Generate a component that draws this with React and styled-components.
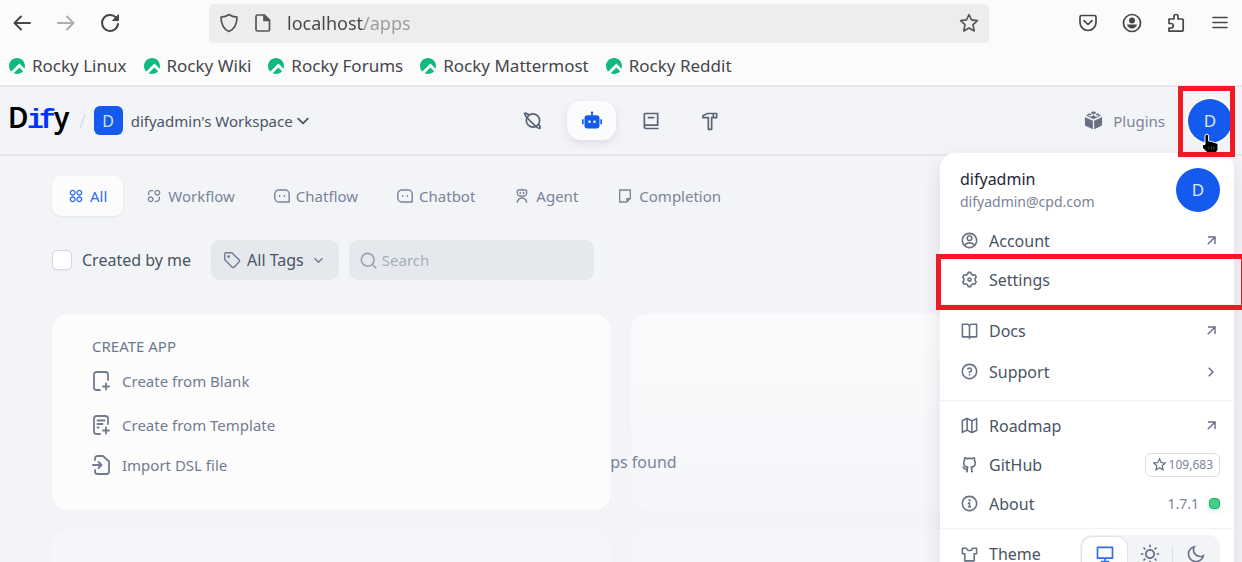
import React, { useState } from "react";
import styled, { createGlobalStyle } from "styled-components";
import {
  RiAccountCircleLine,
  RiApps2Line,
  RiArrowDownSLine,
  RiArrowRightSLine,
  RiArrowRightUpLine,
  RiBook2Line,
  RiBookOpenLine,
  RiComputerLine,
  RiExchange2Line,
  RiFile4Line,
  RiGithubLine,
  RiHammerLine,
  RiInformation2Line,
  RiMap2Line,
  RiMoonLine,
  RiQuestionLine,
  RiRobot2Fill,
  RiRobot3Line,
  RiSearchLine,
  RiSettings3Line,
  RiStarLine,
  RiSunLine,
  RiTShirt2Line,
} from "react-icons/ri";
import { SiRockylinux } from "react-icons/si";

const GlobalStyle = createGlobalStyle`
  * {
    box-sizing: border-box;
  }
  body {
    margin: 0;
    overflow: hidden;
    font-family: "Noto Sans", "Open Sans", sans-serif;
    background: #f2f4f8;
  }
  button, input {
    font-family: inherit;
  }
  button {
    padding: 0;
    border: 0;
    background: none;
    cursor: pointer;
  }
  a {
    color: inherit;
    text-decoration: none;
  }
  svg {
    display: block;
    flex-shrink: 0;
  }
`;

const Page = styled.div`
  display: flex;
  flex-direction: column;
  height: 100vh;
  overflow: hidden;
`;

/* browser chrome */
const Browser = styled.div`
  flex-shrink: 0;
  background: #fbfbfb;
  border-bottom: 2px solid #e6e8ea;
  color: #46464b;
`;
const Toolbar = styled.div`
  display: flex;
  align-items: center;
  height: 46px;
`;
const ToolGroup = styled.div`
  display: flex;
`;
const ToolButton = styled.button`
  display: flex;
  align-items: center;
  justify-content: center;
  width: 44px;
  height: 40px;
  color: ${(props) => (props.$dim ? "#adadaf" : "#46464b")};
`;
const UrlBar = styled.div`
  display: flex;
  align-items: center;
  flex: 1;
  height: 39px;
  margin: 0 77px;
  padding: 0 10px;
  gap: 14px;
  background: #ededed;
  border-radius: 5px;
  color: #55555a;
`;
const UrlInput = styled.input`
  flex: 1;
  min-width: 0;
  padding: 0;
  border: 0;
  outline: 0;
  font-size: 18px;
  line-height: 24px;
  color: transparent;
  background: linear-gradient(to right, #444449 77px, #9b9b9e 77px);
  background-clip: text;
  -webkit-background-clip: text;
`;
const Bookmarks = styled.nav`
  display: flex;
  align-items: center;
  height: 39px;
  padding: 0 9px;
  gap: 17px;
`;
const Bookmark = styled.a`
  display: flex;
  align-items: center;
  gap: 7px;
  font-size: 17px;
  line-height: 24px;
  svg {
    color: #10b981;
  }
`;

/* app header */
const Header = styled.header`
  position: relative;
  z-index: 2;
  display: grid;
  grid-template-columns: 1fr auto 1fr;
  align-items: center;
  flex-shrink: 0;
  height: 69px;
  padding: 0 10px;
  border-bottom: 2px solid #e6e8ec;
`;
const Brand = styled.div`
  display: flex;
  align-items: center;
  gap: 8px;
`;
const Slash = styled.span`
  font-size: 18px;
  line-height: 24px;
  color: #d9dce3;
`;
const Workspace = styled.button`
  display: flex;
  align-items: center;
  gap: 8px;
  font-size: 15px;
  line-height: 24px;
  color: #495464;
`;
const WorkspaceBadge = styled.span`
  width: 29px;
  height: 29px;
  border-radius: 6px;
  background: #155aef;
  color: #d5e2fd;
  font-size: 16px;
  line-height: 30px;
  text-align: center;
`;
const WorkspaceName = styled.span`
  display: flex;
  align-items: center;
  gap: 4px;
`;
const MainNav = styled.nav`
  display: flex;
  gap: 10px;
`;
const NavButton = styled.button`
  display: flex;
  align-items: center;
  justify-content: center;
  width: 49px;
  height: 39px;
  border-radius: 14px;
  color: ${(props) => (props.$active ? "#155aef" : "#596376")};
  background: ${(props) => (props.$active ? "#fcfcfd" : "transparent")};
  box-shadow: ${(props) =>
    props.$active ? "0 3px 8px rgba(16, 24, 40, 0.1)" : "none"};
`;
const HeaderRight = styled.div`
  display: flex;
  align-items: center;
  justify-content: flex-end;
  gap: 23px;
`;
const PluginsLink = styled.a`
  display: flex;
  align-items: center;
  gap: 10px;
  font-size: 15px;
  line-height: 24px;
  color: #7b8498;
`;
const AvatarSlot = styled.div`
  position: relative;
`;
const Avatar = styled.button`
  display: block;
  width: 44px;
  height: 44px;
  border-radius: 50%;
  background: #155aef;
  color: #dce7fd;
  font-size: 17px;
  line-height: 44px;
  text-align: center;
  box-shadow: ${(props) => (props.$ring ? "0 0 0 2px #fff" : "none")};
`;
const AvatarMark = styled.div`
  position: absolute;
  inset: -13px -3px -14px -10px;
  border: 5px solid #ee1b24;
  pointer-events: none;
`;
const Pointer = styled.svg`
  position: absolute;
  left: 12px;
  top: 34px;
`;

/* filters */
const Main = styled.main`
  flex: 1;
  padding: 20px 52px;
`;
const Tabs = styled.div`
  display: flex;
  gap: 7px;
`;
const Tab = styled.button`
  display: flex;
  align-items: center;
  height: 40px;
  padding: 0 16px;
  gap: 6px;
  border-radius: 9px;
  font-size: 15px;
  line-height: 24px;
  color: ${(props) => (props.$active ? "#2f6bf2" : "#7b8498")};
  background: ${(props) => (props.$active ? "#fcfcfd" : "transparent")};
  box-shadow: ${(props) =>
    props.$active ? "0 1px 2px rgba(16, 24, 40, 0.08)" : "none"};
`;
const Filters = styled.div`
  display: flex;
  align-items: center;
  margin-top: 24px;
  margin-bottom: 34px;
  gap: 10px;
`;
const CheckLabel = styled.label`
  display: flex;
  align-items: center;
  gap: 10px;
  margin-right: 10px;
  font-size: 16px;
  line-height: 24px;
  color: #495464;
`;
const Checkbox = styled.input`
  appearance: none;
  width: 20px;
  height: 20px;
  margin: 0;
  border: 1px solid #d3d7df;
  border-radius: 5px;
  background: #fff;
  box-shadow: 0 1px 2px rgba(16, 24, 40, 0.06);
  &:checked {
    background: #155aef;
  }
`;
const TagFilter = styled.button`
  display: flex;
  align-items: center;
  height: 40px;
  padding: 0 12px;
  gap: 6px;
  border-radius: 9px;
  background: #e5e9ee;
  font-size: 16px;
  line-height: 24px;
  color: #495464;
  svg {
    color: #717b8f;
  }
`;
const SearchBox = styled.label`
  display: flex;
  align-items: center;
  width: 245px;
  height: 40px;
  padding: 0 10px;
  gap: 4px;
  border-radius: 9px;
  background: #e5e9ee;
  color: #98a2b3;
`;
const SearchInput = styled.input`
  flex: 1;
  min-width: 0;
  padding: 0;
  border: 0;
  outline: 0;
  background: none;
  font-size: 15px;
  line-height: 24px;
  color: #495464;
  &::placeholder {
    color: #a4adbd;
  }
`;

/* app cards */
const Cards = styled.section`
  position: relative;
  display: grid;
  grid-template-columns: 1fr 1fr;
  grid-auto-rows: 196px;
  gap: 20px;
`;
const CreateCard = styled.div`
  position: relative;
  z-index: 1;
  padding: 20px 40px;
  border-radius: 15px;
  background: #fcfcfd;
  box-shadow: 0 0 1px rgba(16, 24, 40, 0.12);
`;
const CardTitle = styled.h2`
  margin: 0 0 3px;
  font-size: 15px;
  font-weight: 400;
  line-height: 24px;
  color: #6f798d;
`;
const CreateItem = styled.button`
  display: flex;
  align-items: center;
  height: 40px;
  gap: 10px;
  font-size: 15px;
  line-height: 24px;
  color: #717b8f;
  &:first-of-type {
    margin-bottom: 4px;
  }
`;
const GhostCard = styled.div`
  border-radius: 15px;
  background: ${(props) =>
    props.$faint
      ? "#f4f6f9"
      : "linear-gradient(to bottom, #fafbfc, #f7f8fa 50%, #f4f6f9)"};
`;
const EmptyText = styled.p`
  position: absolute;
  top: 136px;
  left: 0;
  right: 0;
  margin: 0;
  font-size: 16px;
  line-height: 24px;
  text-align: center;
  color: #7b8498;
`;

/* account menu */
const Menu = styled.div`
  position: absolute;
  z-index: -1;
  top: 66px;
  right: 8px;
  width: 294px;
  background: #fff;
  border-radius: 15px;
  box-shadow: 0 8px 20px rgba(16, 24, 40, 0.1);
`;
const Profile = styled.div`
  display: flex;
  align-items: center;
  justify-content: space-between;
  height: 68px;
  padding: 6px 14px 0 20px;
`;
const ProfileName = styled.div`
  font-size: 16px;
  line-height: 24px;
  color: #1d2739;
`;
const ProfileMail = styled.div`
  font-size: 14px;
  line-height: 22px;
  color: #7b8498;
`;
const MenuGroup = styled.div`
  display: flex;
  flex-direction: column;
  gap: ${(props) => (props.$roomy ? "2px" : "0")};
  padding: ${(props) => (props.$roomy ? "6px 0 9px" : "5px 0")};
  border-top: 1px solid #f1f2f5;
`;
const AccountGroup = styled(MenuGroup)`
  padding-top: 0;
  border-top: 0;
`;
const MenuItem = styled.button`
  position: relative;
  display: flex;
  align-items: center;
  width: 100%;
  height: 39px;
  padding: 0 14px 0 20px;
  gap: 10px;
  font-size: 16px;
  line-height: 24px;
  text-align: left;
  color: #495464;
  svg {
    color: #677084;
  }
`;
const ItemLabel = styled.span`
  flex: 1;
`;
const ArrowBox = styled.span`
  display: flex;
  justify-content: center;
  width: 18px;
`;
const SettingsMark = styled.span`
  position: absolute;
  inset: -6px -12px -11px -4px;
  border: 5px solid #ee1b24;
  pointer-events: none;
`;
const StarCount = styled.span`
  display: flex;
  align-items: center;
  height: 24px;
  padding: 0 6px;
  gap: 2px;
  border: 1px solid #dcdfe5;
  border-radius: 6px;
  font-size: 12px;
  line-height: 22px;
  color: #7b8498;
`;
const Version = styled.span`
  font-size: 14px;
  line-height: 24px;
  color: #7b8498;
`;
const StatusDot = styled.span`
  width: 11px;
  height: 11px;
  border: 1px solid #17b26a;
  border-radius: 4px;
  background: #47cd89;
  box-shadow: 0 2px 4px rgba(23, 178, 106, 0.25);
`;
const ThemeRow = styled.div`
  display: flex;
  align-items: center;
  height: 40px;
  padding: 0 14px 0 20px;
  gap: 10px;
  font-size: 16px;
  line-height: 24px;
  color: #495464;
  svg {
    color: #677084;
  }
`;
const ThemeSwitch = styled.div`
  display: flex;
  align-items: center;
  padding: 2px;
  border-radius: 12px;
  background: #f2f4f7;
`;
const ThemeButton = styled.button`
  display: flex;
  align-items: center;
  justify-content: center;
  width: 45px;
  height: 35px;
  border-radius: 10px;
  background: ${(props) => (props.$active ? "#fff" : "transparent")};
  box-shadow: ${(props) =>
    props.$active ? "0 0 2px rgba(16, 24, 40, 0.25)" : "none"};
  svg {
    color: ${(props) => (props.$active ? "#2f6bf2" : "#677084")};
  }
`;
const ThemeDivider = styled.span`
  width: 1px;
  height: 17px;
  background: #dcdfe5;
`;

const Stroke = ({ size = 20, width = 2, children }) => (
  <svg
    width={size}
    height={size}
    viewBox="0 0 20 20"
    fill="none"
    stroke="currentColor"
    strokeWidth={width}
    strokeLinecap="round"
    strokeLinejoin="round"
  >
    {children}
  </svg>
);

const BackIcon = () => (
  <Stroke>
    <path d="M18 10H3M9 3.5L2.5 10l6.5 6.5" />
  </Stroke>
);
const ForwardIcon = () => (
  <Stroke>
    <path d="M2 10h15M11 3.5l6.5 6.5-6.5 6.5" />
  </Stroke>
);
const ReloadIcon = () => (
  <Stroke>
    <path d="M18 11a8 8 0 1 1-2-6.5" />
    <path d="M18.5 2v5.5H13z" fill="currentColor" strokeWidth="1" />
  </Stroke>
);
const ShieldIcon = () => (
  <Stroke width={1.7}>
    <path d="M10 1.5c2.5 1.9 5 2.5 8 2.7 0 6.3-2.2 11.500-8 14.300C4.200 15.700 2 10.500 2 4.200c3-.2 5.500-.8 8-2.700z" />
  </Stroke>
);
const PageIcon = () => (
  <Stroke width={1.7}>
    <path d="M4.500 2h7l5 5v9.500a1.500 1.500 0 0 1-1.500 1.500H4.500A1.500 1.500 0 0 1 3 16.500v-13A1.500 1.500 0 0 1 4.500 2z" />
    <path d="M11 2.500V7.500h5z" fill="currentColor" />
  </Stroke>
);
const StarIcon = () => (
  <Stroke width={1.6}>
    <path d="M10 1.500l2.500 5.400 5.900.7-4.400 4 1.200 6.400L10 15l-5.200 3 1.200-6.400-4.400-4 5.900-.7z" />
  </Stroke>
);
const PocketIcon = () => (
  <Stroke width={1.7}>
    <path d="M3.500 2.500h13A1.500 1.500 0 0 1 18 4v5.500a8 8 0 0 1-16 0V4a1.500 1.500 0 0 1 1.500-1.500z" />
    <path d="M6 7.700l4 3.800 4-3.800" />
  </Stroke>
);
const ProfileIcon = () => (
  <Stroke width={1.7}>
    <circle cx="10" cy="10" r="8.5" />
    <circle cx="10" cy="7.5" r="3" fill="currentColor" stroke="none" />
    <path
      d="M5 11.500h10c-.3 2.300-2.500 4-5 4s-4.700-1.700-5-4z"
      fill="currentColor"
      stroke="none"
    />
  </Stroke>
);
const ExtensionIcon = () => (
  <Stroke width={1.7}>
    <path d="M3 6h5V3.500a2 2 0 0 1 4 0V6h4a1.200 1.200 0 0 1 1.200 1.200V17a1.200 1.200 0 0 1-1.200 1.200H3V15h2a2 2 0 0 0 0-4.500H3z" />
  </Stroke>
);
const MenuIcon = () => (
  <Stroke width={1.6}>
    <path d="M3 4.500h14M3 9.500h14M3 14.500h14" />
  </Stroke>
);
const PlanetIcon = () => (
  <Stroke size={19} width={1.8}>
    <circle cx="10.500" cy="10" r="7" />
    <path d="M6 4C3.500 2.300 2 2 1.700 2.600c-1 1.800 13.800 16.800 16 15.700.8-.4.300-2-1.200-4.300" />
  </Stroke>
);
const ChatIcon = () => (
  <Stroke size={16} width={1.8}>
    <path d="M6 2.500h8a5 5 0 0 1 5 5v10H6a5 5 0 0 1-5-5v-5a5 5 0 0 1 5-5z" />
    <path d="M7 9.500v1M13 9.500v1" />
  </Stroke>
);
const TagIcon = () => (
  <Stroke size={18} width={1.6}>
    <path d="M2 3.500A1.500 1.500 0 0 1 3.500 2h6.300l8.200 8a1.500 1.500 0 0 1 0 2l-5.700 6a1.500 1.500 0 0 1-2 0L2 9.800z" />
    <circle cx="6.200" cy="6.200" r=".8" fill="currentColor" />
  </Stroke>
);
const BlankIcon = () => (
  <Stroke size={20} width={1.8}>
    <path d="M8 19H4.500A2.500 2.500 0 0 1 2 16.500v-13A2.500 2.500 0 0 1 4.500 1h9A2.500 2.500 0 0 1 16 3.500V9M14 12.500v6M11 15.500h6" />
  </Stroke>
);
const TemplateIcon = () => (
  <Stroke size={20} width={1.8}>
    <path d="M8 19H4.500A2.500 2.500 0 0 1 2 16.500v-13A2.500 2.500 0 0 1 4.500 1h9A2.500 2.500 0 0 1 16 3.500V9M14 12.500v6M11 15.500h6M5.500 5.500h7M5.500 9h5M5.500 12.500h1" />
  </Stroke>
);
const ImportIcon = () => (
  <Stroke size={20} width={1.8}>
    <path d="M3 5V3.500A2.500 2.500 0 0 1 5.500 1H11l6 5.500v10a2.500 2.500 0 0 1-2.500 2.500h-9A2.500 2.500 0 0 1 3 16.500V15M1 10h8M6.500 7L9.500 10l-3 3" />
  </Stroke>
);
const PluginIcon = () => (
  <svg width="19" height="19" viewBox="0 0 20 20" fill="#677084">
    <path d="M1 6.300l8.300 4v9L2 15.800a1.500 1.500 0 0 1-1-1.400zM19 6.300l-8.300 4v9l7.300-3.500a1.500 1.500 0 0 0 1-1.400z" />
    <path d="M2 4.800L4.500 3.600v1.500l2.500 1 2.500-1V4l1-.3v1.400l2.500 1 2.500-1V3.600L18 4.800l-8 4z" />
    <ellipse cx="10" cy="1.8" rx="2.600" ry="1.300" />
    <ellipse cx="5.800" cy="3.600" rx="2" ry="1" />
    <ellipse cx="14.200" cy="3.600" rx="2" ry="1" />
  </svg>
);
const HandPointer = () => (
  <Pointer width="20" height="22" viewBox="0 0 20 22">
    <path
      d="M5 3a1.800 1.800 0 0 1 3.600 0v5l3 .5 3 1 3.400 1V17l-1.500 2v3H6.500v-3L2.500 15v-3.500H5z"
      fill="#000"
      stroke="#fff"
      strokeWidth="1"
    />
    <path d="M9 13.500v3M11.500 13.500v3M14 13.500v3" stroke="#444" strokeWidth="1" />
  </Pointer>
);
const Logo = () => (
  <svg width="61" height="44" viewBox="0 0 61 44" role="img" aria-label="Dify">
    <text x="-2" y="29" fontSize="28" fontWeight="600" fill="#000">
      D
    </text>
    <text
      x="17 29"
      y="29"
      fontSize="28"
      fontWeight="700"
      fontFamily="Liberation Mono, monospace"
      fill="#0033ff"
    >
      if
    </text>
    <text x="44" y="29" fontSize="28" fontWeight="600" fill="#000">
      y
    </text>
  </svg>
);

const bookmarks = [
  "Rocky Linux",
  "Rocky Wiki",
  "Rocky Forums",
  "Rocky Mattermost",
  "Rocky Reddit",
];

const tabs = [
  { name: "All", Icon: RiApps2Line },
  { name: "Workflow", Icon: RiExchange2Line },
  { name: "Chatflow", Icon: ChatIcon },
  { name: "Chatbot", Icon: ChatIcon },
  { name: "Agent", Icon: RiRobot3Line },
  { name: "Completion", Icon: RiFile4Line },
];

const navItems = [
  { name: "Explore", Icon: PlanetIcon },
  { name: "Studio", Icon: RiRobot2Fill },
  { name: "Knowledge", Icon: RiBook2Line },
  { name: "Tools", Icon: RiHammerLine },
];

const BrowserChrome = () => (
  <Browser>
    <Toolbar>
      <ToolGroup>
        <ToolButton aria-label="Back">
          <BackIcon />
        </ToolButton>
        <ToolButton aria-label="Forward" $dim>
          <ForwardIcon />
        </ToolButton>
        <ToolButton aria-label="Reload">
          <ReloadIcon />
        </ToolButton>
      </ToolGroup>
      <UrlBar>
        <ShieldIcon />
        <PageIcon />
        <UrlInput aria-label="Address" defaultValue="localhost/apps" />
        <StarIcon />
      </UrlBar>
      <ToolGroup>
        <ToolButton aria-label="Save to Pocket">
          <PocketIcon />
        </ToolButton>
        <ToolButton aria-label="Profile">
          <ProfileIcon />
        </ToolButton>
        <ToolButton aria-label="Extensions">
          <ExtensionIcon />
        </ToolButton>
        <ToolButton aria-label="Menu">
          <MenuIcon />
        </ToolButton>
      </ToolGroup>
    </Toolbar>
    <Bookmarks>
      {bookmarks.map((name) => (
        <Bookmark href="#" key={name}>
          <SiRockylinux size={16} />
          {name}
        </Bookmark>
      ))}
    </Bookmarks>
  </Browser>
);

const ExternalArrow = () => (
  <ArrowBox>
    <RiArrowRightUpLine size={17} />
  </ArrowBox>
);

const AccountMenu = () => {
  const [theme, setTheme] = useState("system");
  return (
    <Menu>
      <Profile>
        <div>
          <ProfileName>difyadmin</ProfileName>
          <ProfileMail>difyadmin@cpd.com</ProfileMail>
        </div>
        <Avatar aria-label="Profile picture">D</Avatar>
      </Profile>
      <AccountGroup>
        <MenuItem>
          <RiAccountCircleLine size={19} />
          <ItemLabel>Account</ItemLabel>
          <ExternalArrow />
        </MenuItem>
        <MenuItem>
          <RiSettings3Line size={19} />
          <ItemLabel>Settings</ItemLabel>
          <SettingsMark />
        </MenuItem>
      </AccountGroup>
      <MenuGroup $roomy>
        <MenuItem>
          <RiBookOpenLine size={19} />
          <ItemLabel>Docs</ItemLabel>
          <ExternalArrow />
        </MenuItem>
        <MenuItem>
          <RiQuestionLine size={19} />
          <ItemLabel>Support</ItemLabel>
          <ArrowBox>
            <RiArrowRightSLine size={18} />
          </ArrowBox>
        </MenuItem>
      </MenuGroup>
      <MenuGroup>
        <MenuItem>
          <RiMap2Line size={19} />
          <ItemLabel>Roadmap</ItemLabel>
          <ExternalArrow />
        </MenuItem>
        <MenuItem>
          <RiGithubLine size={19} />
          <ItemLabel>GitHub</ItemLabel>
          <StarCount>
            <RiStarLine size={15} />
            109,683
          </StarCount>
        </MenuItem>
        <MenuItem>
          <RiInformation2Line size={19} />
          <ItemLabel>About</ItemLabel>
          <Version>1.7.1</Version>
          <StatusDot />
        </MenuItem>
      </MenuGroup>
      <MenuGroup>
        <ThemeRow>
          <RiTShirt2Line size={19} />
          <ItemLabel>Theme</ItemLabel>
          <ThemeSwitch>
            <ThemeButton
              aria-label="System"
              $active={theme === "system"}
              onClick={() => setTheme("system")}
            >
              <RiComputerLine size={20} />
            </ThemeButton>
            <ThemeButton
              aria-label="Light"
              $active={theme === "light"}
              onClick={() => setTheme("light")}
            >
              <RiSunLine size={20} />
            </ThemeButton>
            <ThemeDivider />
            <ThemeButton
              aria-label="Dark"
              $active={theme === "dark"}
              onClick={() => setTheme("dark")}
            >
              <RiMoonLine size={20} />
            </ThemeButton>
          </ThemeSwitch>
        </ThemeRow>
      </MenuGroup>
    </Menu>
  );
};

const App = () => {
  const [activeTab, setActiveTab] = useState("All");
  return (
    <>
      <GlobalStyle />
      <Page>
        <BrowserChrome />
        <Header>
          <Brand>
            <Logo />
            <Slash>/</Slash>
            <Workspace>
              <WorkspaceBadge>D</WorkspaceBadge>
              <WorkspaceName>
                difyadmin's Workspace
                <Stroke size={12} width={3}>
                  <path d="M2 6l8 8 8-8" />
                </Stroke>
              </WorkspaceName>
            </Workspace>
          </Brand>
          <MainNav>
            {navItems.map(({ name, Icon }) => (
              <NavButton key={name} aria-label={name} $active={name === "Studio"}>
                <Icon size={20} />
              </NavButton>
            ))}
          </MainNav>
          <HeaderRight>
            <PluginsLink href="#">
              <PluginIcon />
              Plugins
            </PluginsLink>
            <AvatarSlot>
              <Avatar aria-label="Account menu" $ring>
                D
              </Avatar>
              <HandPointer />
              <AvatarMark />
            </AvatarSlot>
          </HeaderRight>
          <AccountMenu />
        </Header>
        <Main>
          <Tabs>
            {tabs.map(({ name, Icon }) => (
              <Tab
                key={name}
                $active={name === activeTab}
                onClick={() => setActiveTab(name)}
              >
                <Icon size={16} />
                {name}
              </Tab>
            ))}
          </Tabs>
          <Filters>
            <CheckLabel>
              <Checkbox type="checkbox" />
              Created by me
            </CheckLabel>
            <TagFilter>
              <TagIcon />
              All Tags
              <RiArrowDownSLine size={17} />
            </TagFilter>
            <SearchBox>
              <RiSearchLine size={19} />
              <SearchInput aria-label="Search" placeholder="Search" />
            </SearchBox>
          </Filters>
          <Cards>
            <CreateCard>
              <CardTitle>CREATE APP</CardTitle>
              <CreateItem>
                <BlankIcon />
                Create from Blank
              </CreateItem>
              <CreateItem>
                <TemplateIcon />
                Create from Template
              </CreateItem>
              <CreateItem>
                <ImportIcon />
                Import DSL file
              </CreateItem>
            </CreateCard>
            <GhostCard />
            <GhostCard $faint />
            <GhostCard $faint />
            <EmptyText>No apps found</EmptyText>
          </Cards>
        </Main>
      </Page>
    </>
  );
};

export default App;
